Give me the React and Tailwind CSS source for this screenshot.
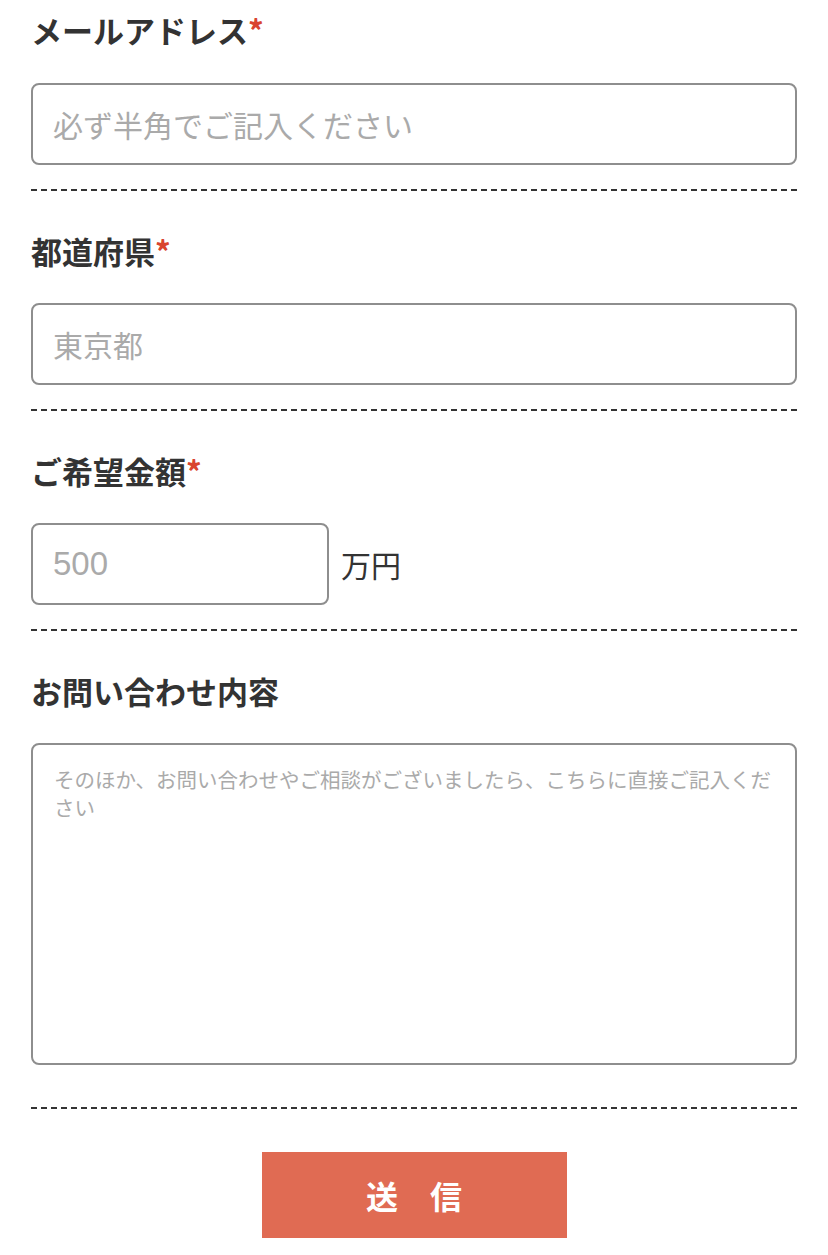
import React from 'react';

const font = { fontFamily: '"Noto Sans CJK JP", "Noto Sans", sans-serif' };

const Label = ({ children, required }) => (
  <div className="text-[31px] leading-[42px] font-bold text-[#333]">
    {children}
    {required && <span className="text-[#d9432f]">*</span>}
  </div>
);

const inputClass =
  'h-[82px] border-2 border-[#8e8e8e] rounded-[8px] px-[20px] text-[30px] text-[#333] placeholder:text-[#aaa] outline-none bg-white';

export default function App() {
  return (
    <div className="bg-white min-h-screen px-[31px]" style={font}>
      <section className="pt-[9px] pb-[24px] border-b-2 border-dashed border-[#333]">
        <Label required>メールアドレス</Label>
        <input type="email" className={`${inputClass} w-full mt-[32px] block`} placeholder="必ず半角でご記入ください" />
      </section>

      <section className="pt-[39px] pb-[24px] border-b-2 border-dashed border-[#333]">
        <Label required>都道府県</Label>
        <input type="text" className={`${inputClass} w-full mt-[31px] block`} placeholder="東京都" />
      </section>

      <section className="pt-[39px] pb-[24px] border-b-2 border-dashed border-[#333]">
        <Label required>ご希望金額</Label>
        <div className="flex items-center gap-[12px] mt-[31px]">
          <input
            type="text"
            className={`${inputClass} w-[298px] block !text-[33px]`}
            placeholder="500"
            style={{ fontFamily: '"Liberation Sans", "Noto Sans CJK JP", sans-serif' }}
          />
          <span className="text-[30px] text-[#333]">万円</span>
        </div>
      </section>

      <section className="pt-[39px] pb-[42px] border-b-2 border-dashed border-[#333]">
        <Label>お問い合わせ内容</Label>
        <textarea
          className="block w-full h-[322px] mt-[31px] border-2 border-[#8e8e8e] rounded-[8px] px-[21px] pt-[20px] text-[20.5px] leading-[28px] text-[#333] placeholder:text-[#aaa] outline-none resize-none"
          placeholder="そのほか、お問い合わせやご相談がございましたら、こちらに直接ご記入ください"
        />
      </section>

      <div className="flex justify-center pt-[43px] pb-[20px]">
        <button className="w-[305px] h-[86px] bg-[#e06b53] text-white text-[32px] font-bold leading-none">
          送　信
        </button>
      </div>
    </div>
  );
}
